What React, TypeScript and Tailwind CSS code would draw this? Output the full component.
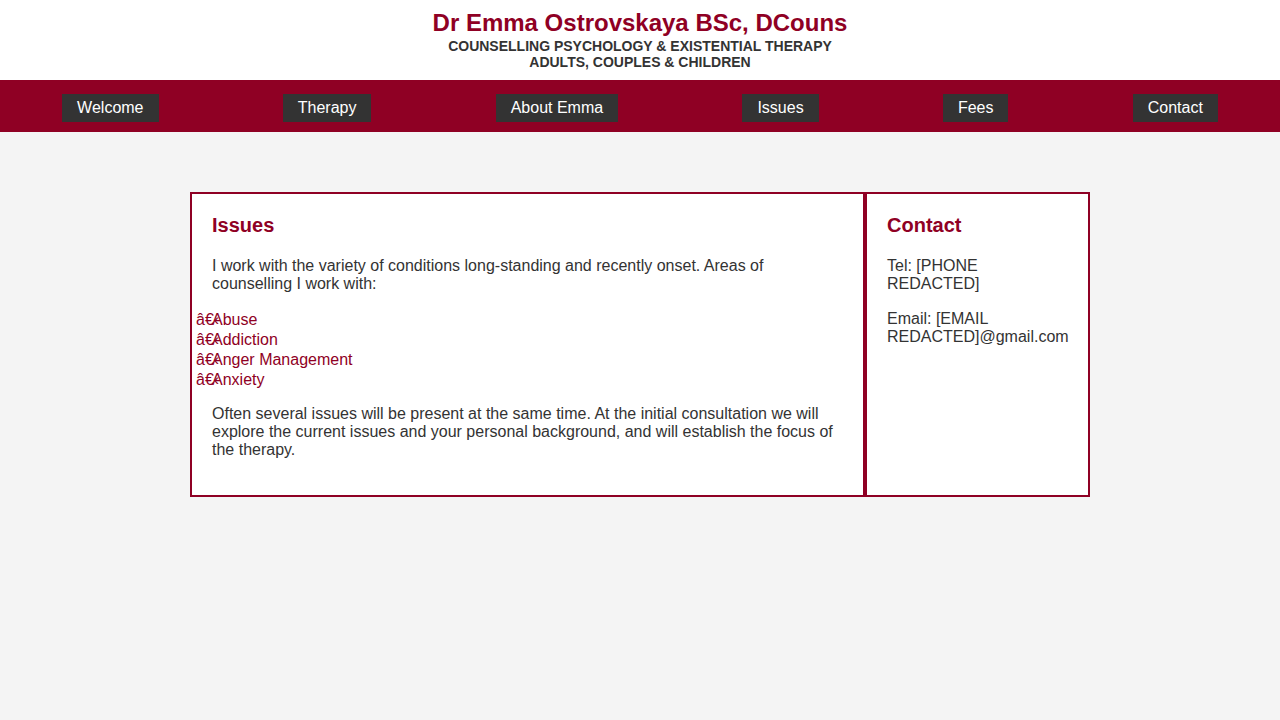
import React from "react";

const RED = "text-[#8f0024]";

function NavBtn({ label }: { label: string }) {
  return (
    <a className="block h-[28px] bg-[#333333] px-[15px] text-[16px] leading-[28px] text-white">
      {label}
    </a>
  );
}

function Item({ label }: { label: string }) {
  return (
    <li className="whitespace-nowrap">
      <span className="ml-[-16px] inline-block w-[16px] overflow-visible">â€‹</span>
      {label}
    </li>
  );
}

export default function App() {
  return (
    <div
      className="min-h-[720px] bg-[#f4f4f4] text-[#333333]"
      style={{ fontFamily: '"Liberation Sans", Arial, Helvetica, sans-serif' }}
    >
      <header className="h-[80px] bg-white pt-[9px] text-center">
        <h1 className={`text-[24px] font-bold leading-[28px] ${RED}`}>
          Dr Emma Ostrovskaya BSc, DCouns
        </h1>
        <div className="mt-[1px] text-[14px] font-bold uppercase leading-[16px] text-[#333333]">
          <div>Counselling Psychology &amp; Existential Therapy</div>
          <div>Adults, Couples &amp; Children</div>
        </div>
      </header>
      <nav className="flex h-[52px] items-start justify-around bg-[#8f0024] pt-[14px]">
        {["Welcome", "Therapy", "About Emma", "Issues", "Fees", "Contact"].map((l) => (
          <NavBtn key={l} label={l} />
        ))}
      </nav>
      <main className="mx-auto mt-[60px] flex w-[900px]">
        <section className="w-[675px] border-2 border-[#8f0024] bg-white px-[20px] pb-[20px] pt-[20px] text-[16px]">
          <h3 className={`mb-[21px] text-[20px] font-bold leading-[22px] ${RED}`}>Issues</h3>
          <p className="mb-[17px] leading-[18px]">
            I work with the variety of conditions long-standing and recently onset. Areas of
            counselling I work with:
          </p>
          <ul className={`mb-[15px] leading-[20px] ${RED}`}>
            <Item label="Abuse" />
            <Item label="Addiction" />
            <Item label="Anger Management" />
            <Item label="Anxiety" />
          </ul>
          <p className="mb-[16px] leading-[18px]">
            Often several issues will be present at the same time. At the initial consultation we
            will explore the current issues and your personal background, and will establish the
            focus of the therapy.
          </p>
        </section>
        <aside className="w-[225px] border-2 border-[#8f0024] bg-white px-[20px] pb-[20px] pt-[20px] text-[16px]">
          <h3 className={`mb-[21px] text-[20px] font-bold leading-[22px] ${RED}`}>Contact</h3>
          <p className="mb-[17px] leading-[18px]">Tel: [PHONE REDACTED]</p>
          <p className="mb-[16px] leading-[18px]">Email: [EMAIL REDACTED]@gmail.com</p>
        </aside>
      </main>
    </div>
  );
}
